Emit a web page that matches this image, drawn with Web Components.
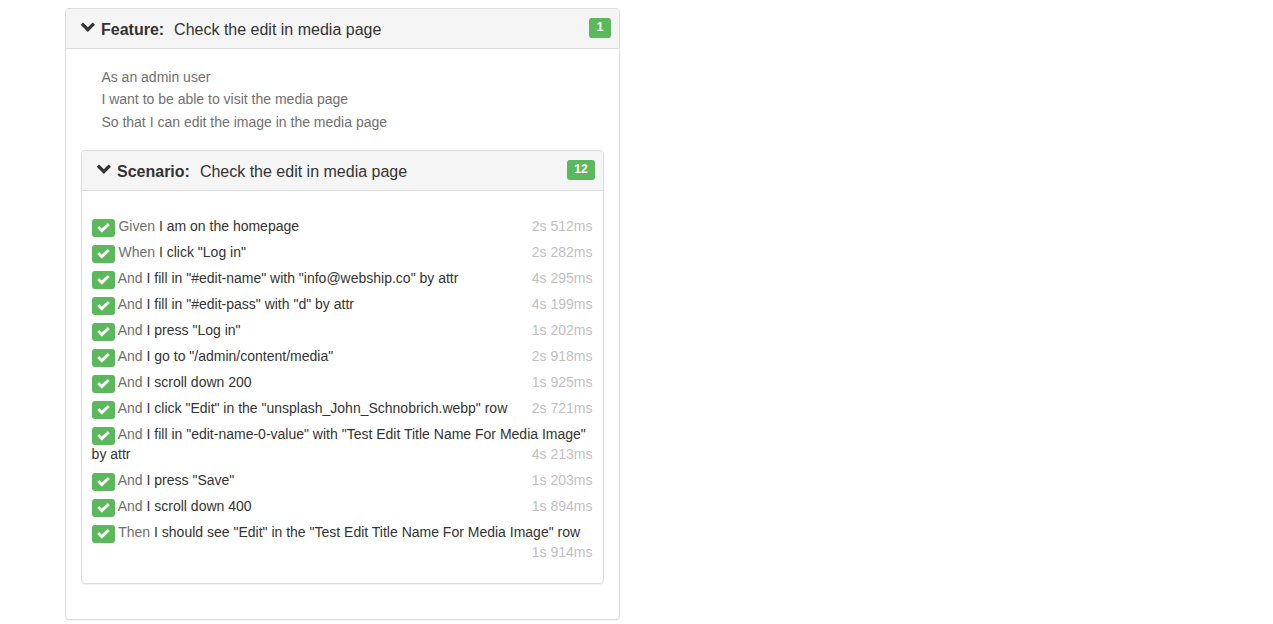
<!DOCTYPE html>
<html lang="en">
<head>
<meta charset="utf-8">
<title>Feature report</title>
<style>
html,body{margin:0;padding:0;background:#fff}
body{font:14px/20px "Liberation Sans",Arial,sans-serif;color:#333}
</style>
</head>
<body>
<report-page>
<report-panel kind="Feature" title-text="Check the edit in media page" count="1" pad="17px 15px 15px 15px" outer>
  <feature-desc>
    <div>As an admin user</div>
    <div>I want to be able to visit the media page</div>
    <div>So that I can edit the image in the media page</div>
  </feature-desc>
  <report-panel kind="Scenario" title-text="Check the edit in media page" count="12" pad="22px 10px 18px 9.6px">
    <step-row kw="Given" time="2s 512ms">I am on the homepage</step-row>
    <step-row kw="When" time="2s 282ms">I click "Log in"</step-row>
    <step-row kw="And" time="4s 295ms">I fill in "#edit-name" with "info@webship.co" by attr</step-row>
    <step-row kw="And" time="4s 199ms">I fill in "#edit-pass" with "d" by attr</step-row>
    <step-row kw="And" time="1s 202ms">I press "Log in"</step-row>
    <step-row kw="And" time="2s 918ms">I go to "/admin/content/media"</step-row>
    <step-row kw="And" time="1s 925ms">I scroll down 200</step-row>
    <step-row kw="And" time="2s 721ms">I click "Edit" in the "unsplash_John_Schnobrich.webp" row</step-row>
    <step-row kw="And" time="4s 213ms">I fill in "edit-name-0-value" with "Test Edit Title Name For Media Image" by attr</step-row>
    <step-row kw="And" time="1s 203ms">I press "Save"</step-row>
    <step-row kw="And" time="1s 894ms">I scroll down 400</step-row>
    <step-row kw="Then" time="1s 914ms">I should see "Edit" in the "Test Edit Title Name For Media Image" row</step-row>
  </report-panel>
</report-panel>
</report-page>
<script>
function shadow(el, html){ el.attachShadow({mode:'open'}).innerHTML = html; }

customElements.define('report-page', class extends HTMLElement{
  constructor(){ super(); shadow(this, `<style>:host{display:block;width:555px;margin:8px 0 0 65px}</style><slot></slot>`); }
});

customElements.define('report-panel', class extends HTMLElement{
  connectedCallback(){
    if(this.shadowRoot) return;
    shadow(this, `<style>
      :host{display:block;box-sizing:border-box;background:#fff;border:1px solid #ddd;border-radius:4px;box-shadow:0 1px 1px rgba(0,0,0,.05);margin-bottom:20px}
      header{display:block;background:#f5f5f5;border-bottom:1px solid #ddd;border-radius:3px 3px 0 0;padding:11px 15px 9px;height:19px;font-size:16px;line-height:20px;color:#333}
      svg{width:16px;height:16px;fill:#333;vertical-align:-1px;display:inline-block;margin-right:5px;margin-left:-1px}
      b{font-weight:700;margin-right:5.5px}
      .t{font-weight:400}
      .badge{float:right;box-sizing:border-box;min-width:22px;text-align:center;background:#5cb85c;color:#fff;font-weight:700;font-size:12px;line-height:14px;padding:2px 7.3px 4px;border-radius:3px;margin-right:-7px;margin-top:-2px}
      main{display:block;padding:${this.getAttribute('pad')}}
    </style>
    <header><span class="badge">${this.getAttribute('count')}</span><svg viewBox="0 0 16 16"><path d="M7.85 11.9 1 5.1a.5.5 0 0 1 0-.7L2.6 2.8a.5.5 0 0 1 .7 0l4.55 4.55L12.4 2.8a.5.5 0 0 1 .7 0l1.6 1.6a.5.5 0 0 1 0 .7z"/></svg><b>${this.getAttribute('kind')}:</b> <span class="t">${this.getAttribute('title-text')}</span></header>
    <main><slot></slot></main>`);
  }
});

customElements.define('feature-desc', class extends HTMLElement{
  constructor(){ super(); shadow(this, `<style>:host{display:block;color:#707070;line-height:22.4px;padding:0 0 17px 20.4px}</style><slot></slot>`); }
});

customElements.define('check-label', class extends HTMLElement{
  constructor(){ super(); shadow(this, `<style>
    :host{display:inline-flex;align-items:center;justify-content:center;width:23px;height:18px;background:#5cb85c;border-radius:3px;vertical-align:top;margin:3px 0 -1px}
    svg{width:13px;height:10px;fill:#fff;stroke:#fff;stroke-width:.3;stroke-linejoin:round;display:block;margin-bottom:1px}
  </style><svg viewBox="0 0 13 10"><path d="M.4 5 2.2 3.2 4.8 5.7 10.6.2 12.5 2 4.8 9.5z"/></svg>`); }
});

customElements.define('step-row', class extends HTMLElement{
  connectedCallback(){
    if(this.shadowRoot) return;
    shadow(this, `<style>
      :host{display:block;padding:3px 0;line-height:20px;color:#333}
      :host::after{content:"";display:block;clear:both}
      .k{color:#707070}
      .time{float:right;color:#c0c0c0;margin-right:.5px}
    </style><check-label></check-label> <span class="k">${this.getAttribute('kw')}</span> <slot></slot><span class="time">${this.getAttribute('time')}</span>`);
  }
});
</script>
</body>
</html>
